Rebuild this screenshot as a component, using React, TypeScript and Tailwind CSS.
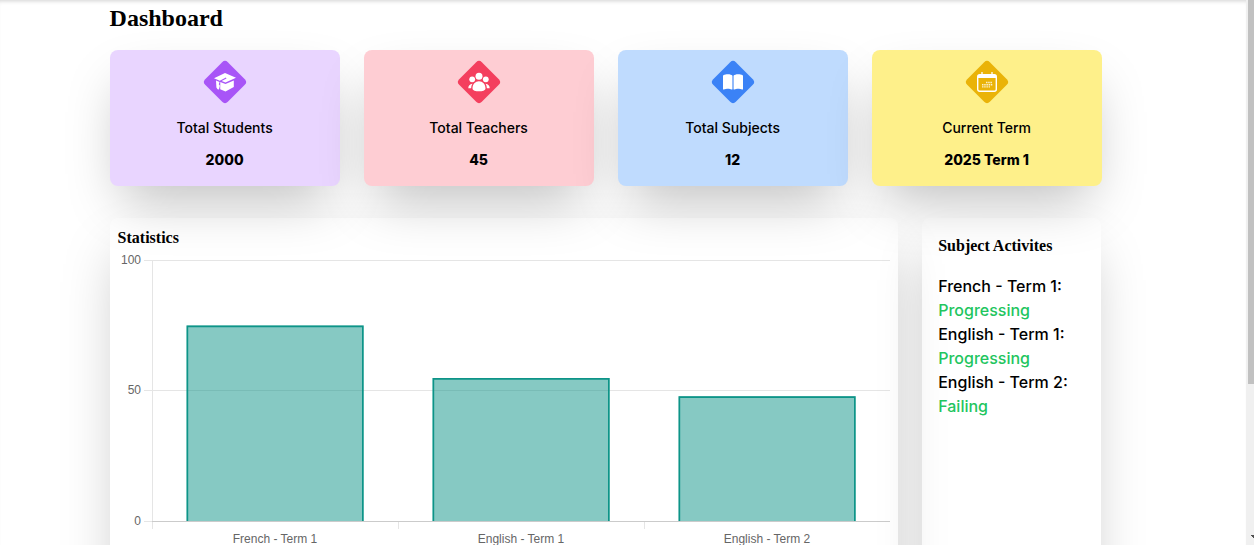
import { FaBookOpen } from 'react-icons/fa6';
import type { ReactNode } from 'react';

const CapIcon = () => (
  <svg width="24" height="22" viewBox="0 0 24 22" fill="white">
    <path d="M12 2 23 6.800 12.500 11.400 8.600 10.100 13.500 7.600 12.900 6.600 6.800 9.700 1 7.300z" />
    <path d="M7.300 11 12.500 12.900l8.300-3.300v6.500L12.500 20.600l-5.300-2.300z" />
    <path d="M3 9.500 6.500 10.900l-.7 2.400 1.100 1.400-1 3.700-1.300-.2-1.200-1.800z" />
  </svg>
);

const PeopleIcon = () => (
  <svg width="22" height="20" viewBox="0 0 22 20" fill="white">
    <circle cx="11" cy="4.300" r="3.500" />
    <circle cx="4.200" cy="7.300" r="2.900" />
    <circle cx="17.800" cy="7.300" r="2.900" />
    <path d="M4.500 16.500c0-4.200 2.800-7.200 6.500-7.200s6.500 3 6.500 7.200c0 2-3.200 2.800-6.500 2.800s-6.500-.8-6.500-2.800zM4.500 11.700C1.700 12 .3 13.600.3 16.200h2.900c0-1.800.4-3.200 1.300-4.500zM17.500 11.700c2.800.3 4.200 1.900 4.200 4.500h-2.900c0-1.800-.4-3.200-1.300-4.500z" />
  </svg>
);

const CalendarIcon = () => (
  <svg width="20" height="20" viewBox="0 0 20 20" fill="none">
    <path d="M5 0v3M15 0v3" stroke="white" strokeWidth="1.300" />
    <rect x=".7" y="2.700" width="18.600" height="16.600" rx="2" stroke="white" strokeWidth="1.400" />
    <path d="M1 3h18v3H1z" fill="white" />
    <path d="M9 10.500h6.500M5 12.700h10.500M5 14.900h8" stroke="white" strokeOpacity=".8" strokeWidth="1.400" strokeDasharray="1.500 .7" />
  </svg>
);

const CARDS: { label: string; value: string; bg: string; diamond: string; icon: ReactNode }[] = [
  { label: 'Total Students', value: '2000', bg: 'bg-[#e9d5ff]', diamond: 'bg-[#a855f7]', icon: <CapIcon /> },
  { label: 'Total Teachers', value: '45', bg: 'bg-[#fecdd3]', diamond: 'bg-[#f43f5e]', icon: <PeopleIcon /> },
  { label: 'Total Subjects', value: '12', bg: 'bg-[#bfdbfe]', diamond: 'bg-[#3b82f6]', icon: <FaBookOpen size={20} color="white" /> },
  { label: 'Current Term', value: '2025 Term 1', bg: 'bg-[#fef08a]', diamond: 'bg-[#eab308]', icon: <CalendarIcon /> },
];

const BARS = [
  { label: 'French - Term 1', x: 76.5, top: 75.5 },
  { label: 'English - Term 1', x: 322.5, top: 128 },
  { label: 'English - Term 2', x: 568.5, top: 146.2 },
];

const ACTIVITIES = [
  ['French - Term 1:', 'Progressing'],
  ['English - Term 1:', 'Progressing'],
  ['English - Term 2:', 'Failing'],
];

function Chart() {
  return (
    <svg width="788" height="320" viewBox="0 0 788 320" className="block shrink-0 font-['Liberation_Sans',sans-serif] text-[12px]">
      <path d="M34 10.500H780M34 140.500H780M34 271.500H42M42.500 10V279M288.500 271V279M534.500 271V279" stroke="#e5e5e5" fill="none" />
      {BARS.map((b) => (
        <g key={b.label}>
          <rect x={b.x} y={b.top} width="177.200" height={271 - b.top} fill="#0d9488" fillOpacity=".5" />
          <path d={`M${b.x + 0.9} 271V${b.top + 0.9}h175.400V271`} fill="none" stroke="#0d9488" strokeWidth="1.600" />
          <text x={b.x + 88.5} y="293" textAnchor="middle" fill="#666">{b.label}</text>
        </g>
      ))}
      <path d="M42 271.500H780" stroke="#cbcbcb" />
      <g textAnchor="end" fill="#666">
        <text x="31" y="14">100</text>
        <text x="31" y="144">50</text>
        <text x="31" y="275">0</text>
      </g>
    </svg>
  );
}

export default function App() {
  return (
    <div className="flex h-[545px] overflow-hidden bg-white font-['Inter',sans-serif] text-black">
      <main className="h-[545px] w-[1246px] shrink-0 overflow-hidden pl-[109.6px] shadow-[inset_0_4px_4px_-3px_rgba(0,0,0,0.18)]">
        <h1 className="pt-[2px] font-['Liberation_Serif',serif] text-2xl leading-8 font-bold">Dashboard</h1>
        <section className="mt-4 grid w-[992px] grid-cols-4 gap-6">
          {CARDS.map((c) => (
            <div key={c.label} className={`flex h-[136px] flex-col items-center rounded-lg shadow-[0_25px_54px_-12px_rgba(0,0,0,0.26)] ${c.bg}`}>
              <div className={`mt-4 flex size-8 rotate-45 items-center justify-center rounded-[4px] ${c.diamond}`}>
                <div className="-rotate-45">{c.icon}</div>
              </div>
              <p className="mt-5 text-sm leading-5 font-medium">{c.label}</p>
              <p className="mt-3 text-sm leading-5 font-extrabold">{c.value}</p>
            </div>
          ))}
        </section>
        <section className="mt-8 flex w-[992px] gap-6">
          <div className="flex h-[400px] w-[788px] flex-col rounded-lg shadow-[0_25px_54px_-12px_rgba(0,0,0,0.25)]">
            <h2 className="mt-2 ml-2 font-['Liberation_Serif',serif] text-base leading-6 font-bold">Statistics</h2>
            <Chart />
          </div>
          <div className="h-[400px] w-[179.600px] rounded-lg p-4 shadow-[0_25px_54px_-12px_rgba(0,0,0,0.25)]">
            <h2 className="pl-[0.600px] font-['Liberation_Serif',serif] text-base leading-6 font-bold">Subject Activites</h2>
            <div className="mt-4 pl-[0.600px] text-base leading-6 font-medium">
              {ACTIVITIES.map(([name, status]) => (
                <div key={name}>
                  <p>{name}</p>
                  <p className="text-[#22c55e]">{status}</p>
                </div>
              ))}
            </div>
          </div>
        </section>
      </main>
      <div className="flex w-2 shrink-0 flex-col items-end justify-between bg-[#f0f0f0]">
        <div className="h-[384px] w-[6px] bg-[#c1c1c1]" />
        <svg width="4" height="10" viewBox="0 0 4 10" fill="#505050" shapeRendering="crispEdges"><path d="M0 0h4v4z" /></svg>
      </div>
    </div>
  );
}
